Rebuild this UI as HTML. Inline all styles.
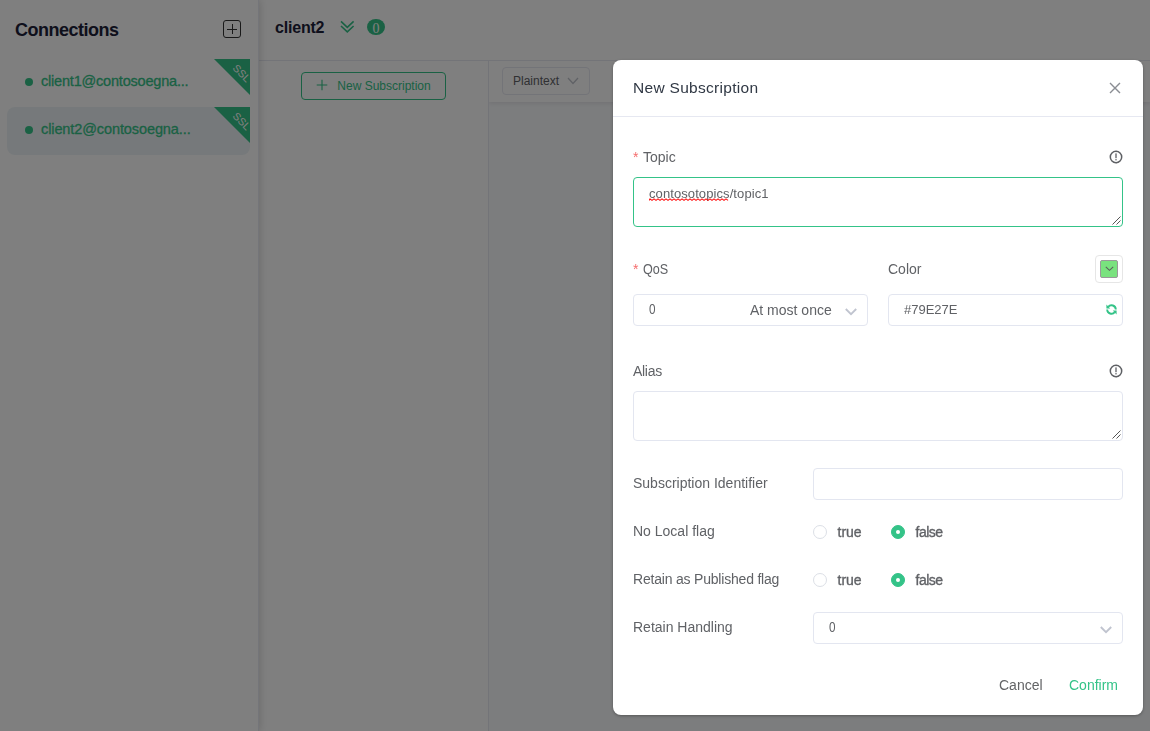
<!DOCTYPE html>
<html><head><meta charset="utf-8">
<style>
*{box-sizing:border-box;margin:0;padding:0}
html,body{width:1150px;height:731px;overflow:hidden;background:#fff;font-family:"Liberation Sans","DejaVu Sans",sans-serif;}
.abs{position:absolute}
#app{position:absolute;left:0;top:0;width:1150px;height:731px;background:#fff}
#side{position:absolute;left:0;top:0;width:259px;height:731px;background:#fff;border-right:1px solid #e9ebf3;box-shadow:1px 0 8px rgba(0,0,0,.16)}
#side h1{position:absolute;left:15px;top:19px;font-size:18px;line-height:22px;font-weight:bold;color:#1c2038;letter-spacing:-0.5px}
.plusbox{position:absolute;left:223px;top:20px;width:18px;height:18px;border:1px solid #333;border-radius:3px}
.plusbox:before{content:"";position:absolute;left:3px;top:7.5px;width:10px;height:1px;background:#333}
.plusbox:after{content:"";position:absolute;left:7.5px;top:3px;width:1px;height:10px;background:#333}
.item{position:absolute;left:7px;width:243px;height:48px;border-radius:8px}
.item .dot{position:absolute;left:18px;top:19px;width:8px;height:8px;border-radius:50%;background:#34c388}
.item .nm{position:absolute;left:34px;top:12.4px;font-size:14.5px;line-height:20px;color:#34c388;font-weight:normal;letter-spacing:0.1px;-webkit-text-stroke:0.3px #34c388}
.item .tri{position:absolute;right:0;top:0;width:0;height:0;border-top:36px solid #34c388;border-left:36px solid transparent}
.item .ssl{position:absolute;right:-1.5px;top:8px;font-size:10.5px;line-height:12px;color:#fff;transform:rotate(45deg);transform-origin:center}
#main{position:absolute;left:259px;top:0;width:891px;height:731px;background:#fff}
#hdr{position:absolute;left:0;top:0;width:891px;height:61px;border-bottom:1px solid #e6e8f1}
#hdr .t{position:absolute;left:16px;top:17px;font-size:16px;line-height:22px;font-weight:bold;color:#1c2038;letter-spacing:-0.2px}
#subs{position:absolute;left:0;top:61px;width:230px;height:670px;border-right:1px solid #e6e8f1}
.nsbtn{position:absolute;left:42px;top:11px;width:145px;height:28px;border:1px solid #34c388;border-radius:4px;color:#34c388;font-size:12px;line-height:27px;text-align:center}
#rp{position:absolute;left:230px;top:61px;width:661px;height:670px;overflow:hidden}
#bar{position:absolute;left:0;top:0;width:661px;height:41px;background:#fff;box-shadow:0 2px 4px rgba(0,0,0,.08)}
.ptx{position:absolute;left:13px;top:6px;width:88px;height:28px;border:1px solid #e6e8f1;border-radius:4px;font-size:12px;line-height:26px;color:#606266;padding-left:10px}
#msgs{position:absolute;left:0;top:41px;width:661px;height:629px;background:#f9fafd}
#mask{position:absolute;left:0;top:0;width:1150px;height:731px;background:rgba(0,0,0,.5)}
#dlg{position:absolute;left:613px;top:60px;width:530px;height:655px;will-change:transform;background:#fff;border-radius:8px;box-shadow:0 1px 3px rgba(0,0,0,.3);color:#606266}
#dlg .hd{position:absolute;left:0;top:0;width:530px;height:57px;border-bottom:1px solid #e6e8f1}
#dlg .hd .tt{position:absolute;left:20px;top:15.5px;font-size:15.5px;line-height:24px;color:#303844;letter-spacing:0.3px}
.lbl{position:absolute;font-size:14px;line-height:20px;color:#606266}
.req{color:#f56c6c;margin-right:4.5px}
.inp{position:absolute;border:1px solid #e3e6f0;border-radius:4px;background:#fff;font-size:13px;color:#606266}
.ta{position:absolute;border:1px solid #e3e6f0;border-radius:4px;background:#fff}

.rad{position:absolute;width:14px;height:14px;border-radius:50%;border:1px solid #dcdfe6;background:#fff}
.rad.on{border-color:#34c388;background:#34c388}
.rad.on:after{content:"";position:absolute;left:4px;top:4px;width:4px;height:4px;border-radius:50%;background:#fff}
.rl{position:absolute;font-size:14px;line-height:20px;color:#606266;-webkit-text-stroke:0.35px #606266}
.btn{font-size:14px;line-height:20px}
.spell{text-decoration:underline wavy #e02020 1px;text-underline-offset:2px}
</style></head><body>
<div id="app">
 <div id="main">
  <div id="hdr"><div class="t">client2</div>
   <svg class="abs" style="left:80px;top:18px" width="18" height="18" viewBox="0 0 18 18"><path d="M2 3.4 L8.3 9.3 L14.6 3.4 M2 8 L8.3 13.9 L14.6 8" fill="none" stroke="#34c388" stroke-width="1.6"/></svg>
   <div class="abs" style="left:108px;top:18.5px;width:18px;height:16.5px;border-radius:9px/8.25px;background:#34c388;color:#fff;font-size:14px;line-height:20px;text-align:center;font-family:'Liberation Serif',serif">0</div>
  </div>
  <div id="subs"><div class="nsbtn">
   <svg class="abs" style="left:14.3px;top:6px" width="12" height="12" viewBox="0 0 12 12"><path d="M6 0.7 V11.3 M0.7 6 H11.3" stroke="#34c388" stroke-width="1.1" fill="none"/></svg>
   <span class="abs" style="left:35.3px;top:5px;line-height:16px;white-space:nowrap">New Subscription</span></div></div>
  <div id="rp"><div id="msgs"></div>
  <div id="bar"><div class="ptx">Plaintext
   <svg class="abs" style="left:64px;top:9px" width="12" height="8" viewBox="0 0 12 8"><path d="M1 1 L6 6.5 L11 1" fill="none" stroke="#c0c4cc" stroke-width="1.3"/></svg></div></div></div>
 </div>
 <div id="side">
  <h1>Connections</h1>
  <div class="plusbox"></div>
  <div class="item" style="top:59px"><div class="dot"></div><div class="nm" style="letter-spacing:-0.2px">client1@contosoegna...</div><div class="tri"></div><div class="ssl">SSL</div></div>
  <div class="item" style="top:107px;background:#edf3f6"><div class="dot"></div><div class="nm" style="letter-spacing:-0.1px">client2@contosoegna...</div><div class="tri"></div><div class="ssl">SSL</div></div>
 </div>
</div>
<div id="mask"></div>
<div id="dlg">
 <div class="hd"><div class="tt">New Subscription</div>
  <svg class="abs" style="left:496px;top:22px" width="12" height="12" viewBox="0 0 12 12"><path d="M1 1 L11 11 M11 1 L1 11" stroke="#8a8d93" stroke-width="1.4" fill="none"/></svg>
 </div>
 <div class="lbl" style="left:20px;top:87px"><span class="req">*</span>Topic</div>
 <svg class="abs info" style="left:496px;top:89.6px" width="14" height="14" viewBox="0 0 14 14"><circle cx="7" cy="7" r="5.7" fill="none" stroke="#5e6064" stroke-width="1.5"/><rect x="6.3" y="3.4" width="1.4" height="4.8" fill="#6a6c70"/><rect x="6.3" y="9.1" width="1.4" height="1.3" fill="#6a6c70"/></svg>
 <div class="ta" style="left:20px;top:117px;width:490px;height:50px;border-color:#34c388">
  <div class="abs tx" style="left:15px;top:5.5px;font-size:13px;line-height:20px;color:#606266;white-space:nowrap;letter-spacing:0.09px">contosotopics/topic1</div>
  <svg class="abs" style="left:15.4px;top:20.3px" width="81" height="4" viewBox="0 0 81 4"><path d="M0 2.4 L1 0.9  L3 2.4  L5 0.9  L7 2.4  L9 0.9  L11 2.4  L13 0.9  L15 2.4  L17 0.9  L19 2.4  L21 0.9  L23 2.4  L25 0.9  L27 2.4  L29 0.9  L31 2.4  L33 0.9  L35 2.4  L37 0.9  L39 2.4  L41 0.9  L43 2.4  L45 0.9  L47 2.4  L49 0.9  L51 2.4  L53 0.9  L55 2.4  L57 0.9  L59 2.4  L61 0.9  L63 2.4  L65 0.9  L67 2.4  L69 0.9  L71 2.4  L73 0.9  L75 2.4  L77 0.9  L79 2.4 " fill="none" stroke="#ff1010" stroke-width="1.1" stroke-linejoin="round"/></svg>
  <svg class="abs" style="right:1px;bottom:1px" width="9" height="9" viewBox="0 0 9 9"><path d="M0.5 8.5 L8.5 0.5 M4.5 8.5 L8.5 4.5" stroke="#555" stroke-width="1" fill="none"/></svg>
 </div>
 <div class="lbl" style="left:20px;top:199px"><span class="req">*</span><span style="display:inline-block;transform:scaleX(0.9);transform-origin:0 50%">QoS</span></div>
 <div class="lbl" style="left:275px;top:199px">Color</div>
 <div class="abs" style="left:482px;top:195px;width:28px;height:28px;border:1px solid #e6e6e6;border-radius:4px">
  <div class="abs" style="left:4px;top:4px;width:18px;height:18px;border:1px solid #999;border-radius:2px;background:#79e27e"></div>
  <svg class="abs" style="left:8.5px;top:10px" width="9" height="6" viewBox="0 0 9 6"><path d="M0.8 0.9 L4.5 4.4 L8.2 0.9" stroke="#5c5c5c" stroke-width="1.05" fill="none"/></svg>
 </div>
 <div class="inp" style="left:20px;top:234px;width:235px;height:32px">
  <div class="abs" style="left:15px;top:3.5px;font-size:14px;line-height:20px;transform:scaleX(0.84);transform-origin:0 50%">0</div>
  <div class="abs" style="left:116px;top:5px;font-size:14px;line-height:20px;white-space:nowrap">At most once</div>
  <svg class="abs" style="left:210.5px;top:13px" width="12" height="8" viewBox="0 0 12 8"><path d="M0.8 1 L6 6.2 L11.2 1" fill="none" stroke="#c0c4cf" stroke-width="1.9"/></svg>
 </div>
 <div class="inp" style="left:275px;top:234px;width:235px;height:32px">
  <div class="abs" style="left:15px;top:5px;font-size:13px;line-height:20px">#79E27E</div>
  <svg class="abs" style="left:216px;top:7.6px;transform:scaleX(-1)" width="13" height="13" viewBox="0 0 13 13"><path d="M2.2 6.5 A4.3 4.3 0 0 1 9.8 3.8 M10.8 6.5 A4.3 4.3 0 0 1 3.2 9.2" fill="none" stroke="#34c388" stroke-width="1.9"/><path d="M11.6 1.6 L11.6 5.4 L7.8 5.4 Z M1.4 11.4 L1.4 7.6 L5.2 7.6 Z" fill="#34c388"/></svg>
 </div>
 <div class="lbl" style="left:20px;top:301px;letter-spacing:-0.3px">Alias</div>
 <svg class="abs info" style="left:496px;top:303.6px" width="14" height="14" viewBox="0 0 14 14"><circle cx="7" cy="7" r="5.7" fill="none" stroke="#5e6064" stroke-width="1.5"/><rect x="6.3" y="3.4" width="1.4" height="4.8" fill="#6a6c70"/><rect x="6.3" y="9.1" width="1.4" height="1.3" fill="#6a6c70"/></svg>
 <div class="ta" style="left:20px;top:331px;width:490px;height:50px">
  <svg class="abs" style="right:1px;bottom:1px" width="9" height="9" viewBox="0 0 9 9"><path d="M0.5 8.5 L8.5 0.5 M4.5 8.5 L8.5 4.5" stroke="#555" stroke-width="1" fill="none"/></svg>
 </div>
 <div class="lbl" style="left:20px;top:413px">Subscription Identifier</div>
 <div class="inp" style="left:200px;top:408px;width:310px;height:32px"></div>
 <div class="lbl" style="left:20px;top:461px">No Local flag</div>
 <div class="rad" style="left:200px;top:465px"></div><div class="rl" style="left:224.5px;top:461.5px">true</div>
 <div class="rad on" style="left:278px;top:465px"></div><div class="rl" style="left:302.5px;top:461.5px;letter-spacing:-0.5px">false</div>
 <div class="lbl" style="left:20px;top:509px;letter-spacing:-0.2px">Retain as Published flag</div>
 <div class="rad" style="left:200px;top:513px"></div><div class="rl" style="left:224.5px;top:509.5px">true</div>
 <div class="rad on" style="left:278px;top:513px"></div><div class="rl" style="left:302.5px;top:509.5px;letter-spacing:-0.5px">false</div>
 <div class="lbl" style="left:20px;top:557px">Retain Handling</div>
 <div class="inp" style="left:200px;top:552px;width:310px;height:32px">
  <div class="abs" style="left:15px;top:3.5px;font-size:14px;line-height:20px;transform:scaleX(0.84);transform-origin:0 50%">0</div>
  <svg class="abs" style="left:285.5px;top:13px" width="12" height="8" viewBox="0 0 12 8"><path d="M0.8 1 L6 6.2 L11.2 1" fill="none" stroke="#c0c4cf" stroke-width="1.9"/></svg>
 </div>
 <div class="abs btn" style="left:386px;top:615px;color:#636466">Cancel</div>
 <div class="abs btn" style="left:456px;top:615px;color:#34c388">Confirm</div>
</div>
</body></html>
